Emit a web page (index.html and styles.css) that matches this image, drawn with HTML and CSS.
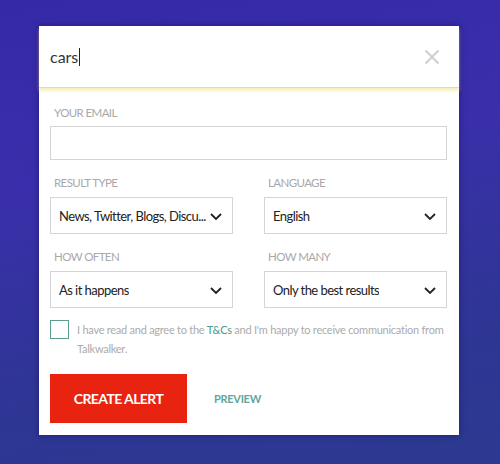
FILE: index.html
```html
<!DOCTYPE html>
<html>
<head>
<meta charset="utf-8">
<link rel="stylesheet" href="styles.css">
</head>
<body>
<div class="page">
  <div class="card">
    <div class="search">
      <span class="query">cars</span><span class="caret"></span>
      <svg class="close" width="16" height="16" viewBox="0 0 16 16"><path d="M1.5 1.5 L14.5 14.5 M14.5 1.5 L1.5 14.5" stroke="#cfcfcf" stroke-width="2" fill="none"/></svg>
    </div>
    <div class="form">
      <div class="label first">YOUR EMAIL</div>
      <div class="input"></div>
      <div class="grid">
        <div class="field">
          <div class="label">RESULT TYPE</div>
          <div class="select"><span class="value">News, Twitter, Blogs, Discu...</span><svg class="chev" width="12" height="7" viewBox="0 0 12 7"><path d="M1 1 L6 6 L11 1" stroke="#222" stroke-width="1.8" fill="none"/></svg></div>
        </div>
        <div class="field">
          <div class="label">LANGUAGE</div>
          <div class="select"><span class="value">English</span><svg class="chev" width="12" height="7" viewBox="0 0 12 7"><path d="M1 1 L6 6 L11 1" stroke="#222" stroke-width="1.8" fill="none"/></svg></div>
        </div>
        <div class="field">
          <div class="label">HOW OFTEN</div>
          <div class="select"><span class="value">As it happens</span><svg class="chev" width="12" height="7" viewBox="0 0 12 7"><path d="M1 1 L6 6 L11 1" stroke="#222" stroke-width="1.8" fill="none"/></svg></div>
        </div>
        <div class="field">
          <div class="label">HOW MANY</div>
          <div class="select"><span class="value">Only the best results</span><svg class="chev" width="12" height="7" viewBox="0 0 12 7"><path d="M1 1 L6 6 L11 1" stroke="#222" stroke-width="1.8" fill="none"/></svg></div>
        </div>
      </div>
      <div class="agree">
        <span class="box"></span>
        <p class="terms">I have read and agree to the <span class="link">T&amp;Cs</span> and I'm happy to receive communication from Talkwalker.</p>
      </div>
      <div class="actions">
        <button class="create">CREATE ALERT</button>
        <span class="preview">PREVIEW</span>
      </div>
    </div>
  </div>
</div>
</body>
</html>
```
FILE: styles.css
```css
html, body {
  margin: 0;
  padding: 0;
}
body {
  width: 500px;
  height: 464px;
  overflow: hidden;
  background: linear-gradient(170deg, #3529a8 0%, #3a2fab 35%, #2f3596 70%, #2b3a90 100%);
  font-family: Lato, "Open Sans", sans-serif;
}
.page {
  padding: 26px 0 0 39px;
}
.card {
  width: 420px;
  box-shadow: 0 0 6px rgba(20, 10, 80, 0.5);
}
.search {
  height: 61px;
  background: #fff;
  display: flex;
  align-items: center;
  padding: 0 19px 0 11px;
  border-bottom: 1px solid #d8d8d8;
  box-shadow: 0 3px 3px rgba(240, 225, 140, 0.55);
  position: relative;
  z-index: 1;
}
.query {
  font-size: 16px;
  color: #333;
}
.caret {
  display: inline-block;
  width: 1px;
  height: 18px;
  background: #222;
  margin-left: 1px;
}
.close {
  margin-left: auto;
}
.form {
  background: #fff;
  padding: 18px 12px 12px 11px;
}
.label {
  font-size: 11.5px;
  letter-spacing: -0.6px;
  line-height: 14px;
  color: #a9a9a9;
  padding-left: 4px;
  margin-bottom: 7px;
}
.label.first {
  margin-bottom: 6px;
}
.input {
  height: 32px;
  border: 1px solid #d5d5d5;
  margin-bottom: 16px;
}
.grid {
  display: grid;
  grid-template-columns: minmax(0, 1fr) minmax(0, 1fr);
  column-gap: 31px;
  row-gap: 16px;
}
.field {
  min-width: 0;
}
.select {
  height: 35px;
  border: 1px solid #d5d5d5;
  display: flex;
  align-items: center;
  padding: 0 10px 0 8px;
}
.value {
  font-size: 13px;
  letter-spacing: -0.55px;
  color: #222;
  white-space: nowrap;
  overflow: hidden;
  min-width: 0;
}
.chev {
  flex: none;
  margin-left: auto;
  margin-top: 2px;
}
.agree {
  display: flex;
  margin-top: 12px;
}
.box {
  flex: none;
  width: 17px;
  height: 17px;
  border: 1px solid #5b9e90;
}
.terms {
  margin: 0 0 0 8px;
  font-size: 11px;
  letter-spacing: -0.25px;
  line-height: 19px;
  color: #ababab;
}
.link {
  color: #4e9a8b;
}
.actions {
  display: flex;
  align-items: center;
  margin-top: 16px;
}
.create {
  width: 137px;
  height: 49px;
  border: none;
  background: #e8230f;
  color: #fff;
  font-family: Lato, sans-serif;
  font-weight: 700;
  font-size: 14px;
  letter-spacing: -0.6px;
  padding: 0;
}
.preview {
  margin-left: 27px;
  font-size: 11px;
  font-weight: 700;
  letter-spacing: -0.3px;
  color: #5fa79a;
}
```
